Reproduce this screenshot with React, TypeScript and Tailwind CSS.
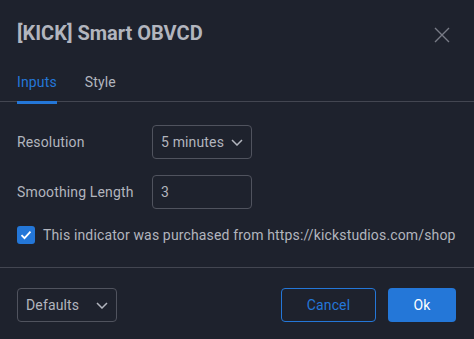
import React from "react";

const Chevron = () => (
  <svg width="12" height="7" viewBox="0 0 12 7" fill="none" className="shrink-0">
    <path d="M1 1l5 5 5-5" stroke="#b2b5be" strokeWidth="1.5" />
  </svg>
);

export default function App() {
  return (
    <div
      className="w-[474px] h-[339px] bg-[#1e222d] flex flex-col text-[#b2b5be] overflow-hidden tracking-[0.15px]"
      style={{ fontFamily: "Roboto, 'Noto Sans', sans-serif" }}
    >
      <div className="flex justify-between pl-[17px] pr-[24px] pt-[21px]">
        <div className="text-[20px] leading-[24px] font-bold text-[#b2b5be] tracking-normal">[KICK] Smart OBVCD</div>
        <svg width="16" height="16" viewBox="0 0 16 16" className="mt-[6px]">
          <path d="M1 1l14 14M15 1L1 15" stroke="#787b86" strokeWidth="1.4" />
        </svg>
      </div>
      <div className="flex gap-[28px] pl-[17px] mt-[27px] pb-[9px] border-b border-[#434651] text-[14px] leading-[20px]">
        <div className="relative text-[#2477d8]">
          Inputs
          <div className="absolute left-0 right-0 top-[29px] h-[3px] bg-[#2477d8]" />
        </div>
        <div className="text-[#b2b5be]">Style</div>
      </div>
      <div className="flex flex-col px-[17px] pt-[23px] text-[14px] border-b border-[#434651] pb-[23px]">
        <div className="flex items-center h-[34px]">
          <div className="w-[135px]">Resolution</div>
          <div className="w-[100px] h-[34px] border border-[#50535e] rounded-[4px] flex items-center justify-between pl-[8px] pr-[8px]">
            <span>5 minutes</span>
            <Chevron />
          </div>
        </div>
        <div className="flex items-center h-[34px] mt-[16px]">
          <div className="w-[135px]">Smoothing Length</div>
          <div className="w-[100px] h-[34px] border border-[#50535e] rounded-[4px] flex items-center pl-[8px]">
            3
          </div>
        </div>
        <div className="flex items-center mt-[17px] gap-[8px] h-[18px]">
          <div className="w-[18px] h-[18px] rounded-[3px] bg-[#2477d8] flex items-center justify-center shrink-0">
            <svg width="12" height="10" viewBox="0 0 12 10" fill="none">
              <path d="M1.5 5.2l3 3 6-6.5" stroke="#ffffff" strokeWidth="1.8" />
            </svg>
          </div>
          <span className="whitespace-nowrap">This indicator was purchased from https://kickstudios.com/shop</span>
        </div>
      </div>
      <div className="flex items-center justify-between pl-[17px] pr-[18px] pt-[20px] text-[14px]">
        <div className="w-[100px] h-[34px] border border-[#50535e] rounded-[4px] flex items-center justify-between pl-[8px] pr-[8px]">
          <span>Defaults</span>
          <Chevron />
        </div>
        <div className="flex gap-[12px]">
          <div className="w-[95px] h-[34px] border border-[#2477d8] rounded-[4px] flex items-center justify-center text-[#2477d8]">
            Cancel
          </div>
          <div className="w-[68px] h-[34px] rounded-[4px] bg-[#2477d8] flex items-center justify-center text-white">
            Ok
          </div>
        </div>
      </div>
    </div>
  );
}
